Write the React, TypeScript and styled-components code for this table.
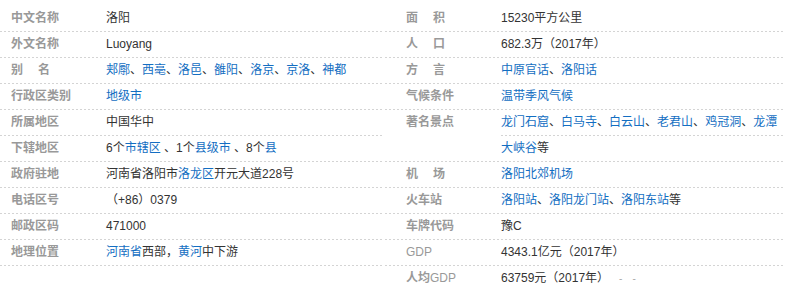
import React from 'react';
import styled, { createGlobalStyle } from 'styled-components';

const Global = createGlobalStyle`
  html, body { margin: 0; padding: 0; background: #fff; }
  body {
    font-family: "Liberation Sans", Arial, "Noto Sans CJK SC", sans-serif;
    font-size: 12px;
    color: #333;
  }
`;

const dashed = `
  background-image: linear-gradient(to right, #d4d4d4 50%, transparent 50%);
  background-position: left bottom;
  background-size: 4px 1px;
  background-repeat: repeat-x;
`;

const Panel = styled.div`
  width: 785px;
  padding-top: 6px;
  display: flex;
  gap: 1px;
`;

const Column = styled.dl<{ $width: number }>`
  margin: 0;
  width: ${(p) => p.$width}px;
  flex-shrink: 0;
  display: flex;
  flex-direction: column;
`;

const Row = styled.div<{ $indent: number }>`
  display: grid;
  grid-template-columns: 75px 1fr;
  padding-left: ${(p) => p.$indent}px;
  padding-bottom: 1px;
  line-height: 25px;
  ${dashed}
`;

const Label = styled.dt`
  margin: 0;
  font-weight: bold;
  color: #999;
  white-space: nowrap;
`;

const Latin = styled.span`
  font-weight: normal;
`;

const Gap = styled.span`
  display: inline-block;
  width: 15px;
`;

const Value = styled.dd`
  margin: 0;
  padding-left: 20px;
  white-space: nowrap;
`;

const ValueLine = styled.div<{ $ruled: boolean }>`
  ${(p) => (p.$ruled ? dashed + 'padding-bottom: 1px;' : '')}
`;

const Link = styled.a`
  color: #136ec2;
  text-decoration: none;
`;

const Mark = styled.span<{ $offset: number }>`
  margin-left: ${(p) => p.$offset}px;
  color: #aaa;
  font-size: 10px;
`;

type Seg = string | { a: string } | { mark: number };
type Item = { label: string; spaced?: boolean; lines: Seg[][] };

const sep = '、';

const left: Item[] = [
  { label: '中文名称', lines: [['洛阳']] },
  { label: '外文名称', lines: [['Luoyang']] },
  {
    label: '别名',
    spaced: true,
    lines: [[
      { a: '郏鄏' }, sep, { a: '西亳' }, sep, { a: '洛邑' }, sep, { a: '雒阳' }, sep,
      { a: '洛京' }, sep, { a: '京洛' }, sep, { a: '神都' },
    ]],
  },
  { label: '行政区类别', lines: [[{ a: '地级市' }]] },
  { label: '所属地区', lines: [['中国华中']] },
  {
    label: '下辖地区',
    lines: [['6个', { a: '市辖区' }, ' 、1个', { a: '县级市' }, ' 、8个', { a: '县' }]],
  },
  { label: '政府驻地', lines: [['河南省洛阳市', { a: '洛龙区' }, '开元大道228号']] },
  { label: '电话区号', lines: [['（+86）0379']] },
  { label: '邮政区码', lines: [['471000']] },
  { label: '地理位置', lines: [[{ a: '河南省' }, '西部，', { a: '黄河' }, '中下游']] },
];

const right: Item[] = [
  { label: '面积', spaced: true, lines: [['15230平方公里']] },
  { label: '人口', spaced: true, lines: [['682.3万（2017年）']] },
  { label: '方言', spaced: true, lines: [[{ a: '中原官话' }, sep, { a: '洛阳话' }]] },
  { label: '气候条件', lines: [[{ a: '温带季风气候' }]] },
  {
    label: '著名景点',
    lines: [
      [
        { a: '龙门石窟' }, sep, { a: '白马寺' }, sep, { a: '白云山' }, sep,
        { a: '老君山' }, sep, { a: '鸡冠洞' }, sep, { a: '龙潭' },
      ],
      [{ a: '大峡谷' }, '等'],
    ],
  },
  { label: '机场', spaced: true, lines: [[{ a: '洛阳北郊机场' }]] },
  {
    label: '火车站',
    lines: [[{ a: '洛阳站' }, sep, { a: '洛阳龙门站' }, sep, { a: '洛阳东站' }, '等']],
  },
  { label: '车牌代码', lines: [['豫C']] },
  { label: 'GDP', lines: [['4343.1亿元（2017年）']] },
  { label: '人均GDP', lines: [['63759元（2017年）', { mark: 10 }, { mark: 10 }]] },
];

function renderSeg(s: Seg, i: number) {
  if (typeof s === 'string') return <React.Fragment key={i}>{s}</React.Fragment>;
  if ('a' in s) return <Link key={i} href="#">{s.a}</Link>;
  return <Mark key={i} $offset={s.mark}>-</Mark>;
}

function renderLabel(item: Item) {
  if (item.spaced) {
    const chars = Array.from(item.label);
    return (
      <>
        {chars[0]}
        <Gap />
        {chars[chars.length - 1]}
      </>
    );
  }
  const parts = item.label.split(/(GDP)/).filter(Boolean);
  return parts.map((p, i) =>
    p === 'GDP' ? <Latin key={i}>{p}</Latin> : <React.Fragment key={i}>{p}</React.Fragment>
  );
}

function InfoColumn({ items, width, indent }: { items: Item[]; width: number; indent: number }) {
  return (
    <Column $width={width}>
      {items.map((item) => (
        <Row key={item.label} $indent={indent}>
          <Label>{renderLabel(item)}</Label>
          <Value>
            {item.lines.map((line, li) => (
              <ValueLine key={li} $ruled={li < item.lines.length - 1}>
                {line.map(renderSeg)}
              </ValueLine>
            ))}
          </Value>
        </Row>
      ))}
    </Column>
  );
}

export default function App() {
  return (
    <>
      <Global />
      <Panel>
        <InfoColumn items={left} width={384} indent={11} />
        <InfoColumn items={right} width={400} indent={21} />
      </Panel>
    </>
  );
}
